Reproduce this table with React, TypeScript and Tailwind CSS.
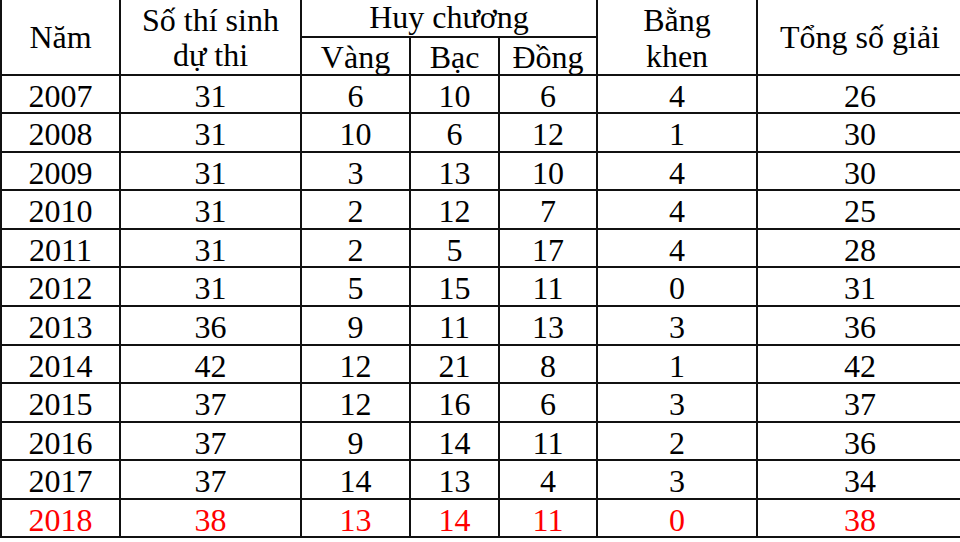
const rows: [string, string, string, string, string, string, string][] = [
  ["2007", "31", "6", "10", "6", "4", "26"],
  ["2008", "31", "10", "6", "12", "1", "30"],
  ["2009", "31", "3", "13", "10", "4", "30"],
  ["2010", "31", "2", "12", "7", "4", "25"],
  ["2011", "31", "2", "5", "17", "4", "28"],
  ["2012", "31", "5", "15", "11", "0", "31"],
  ["2013", "36", "9", "11", "13", "3", "36"],
  ["2014", "42", "12", "21", "8", "1", "42"],
  ["2015", "37", "12", "16", "6", "3", "37"],
  ["2016", "37", "9", "14", "11", "2", "36"],
  ["2017", "37", "14", "13", "4", "3", "34"],
  ["2018", "38", "13", "14", "11", "0", "38"],
];

const cell = "border-r-2 border-b-2 border-[#111]";

export default function App() {
  return (
    <div className="w-[960px] h-[542px] overflow-hidden bg-white">
      <div
        className="grid w-[964px] border-l-2 border-[#111] text-[32px] text-black grid-cols-[119px_181px_109px_89px_98px_160px_206px] grid-rows-[38.3px_37.4px_repeat(12,38.55px)]"
        style={{ fontFamily: '"Liberation Serif", "Times New Roman", serif' }}
      >
        <div className={`${cell} row-span-2 flex items-center justify-center leading-[36px]`}>Năm</div>
        <div className={`${cell} row-span-2 flex flex-col items-center justify-center pt-[2px] leading-[35px]`}>
          <span>Số thí sinh</span>
          <span>dự thi</span>
        </div>
        <div className={`${cell} col-span-3 flex items-center justify-center pb-[2px] leading-[36px]`}>Huy chương</div>
        <div className={`${cell} row-span-2 flex flex-col items-center justify-center pt-[2px] leading-[36px]`}>
          <span>Bằng</span>
          <span>khen</span>
        </div>
        <div className={`${cell} row-span-2 flex items-center justify-center leading-[36px]`}>Tổng số giải</div>
        <div className={`${cell} flex items-center justify-center pt-[3px] leading-[35px]`}>Vàng</div>
        <div className={`${cell} flex items-center justify-center pt-[3px] leading-[35px]`}>Bạc</div>
        <div className={`${cell} flex items-center justify-center pt-[3px] leading-[35px]`}>Đồng</div>

        {rows.map((r, i) =>
          r.map((v, j) => (
            <div
              key={`${i}-${j}`}
              className={`${cell} pt-[2px] leading-[36px] text-center ${i === rows.length - 1 ? "text-[#ff0000]" : ""}`}
            >
              {v}
            </div>
          ))
        )}
      </div>
    </div>
  );
}
